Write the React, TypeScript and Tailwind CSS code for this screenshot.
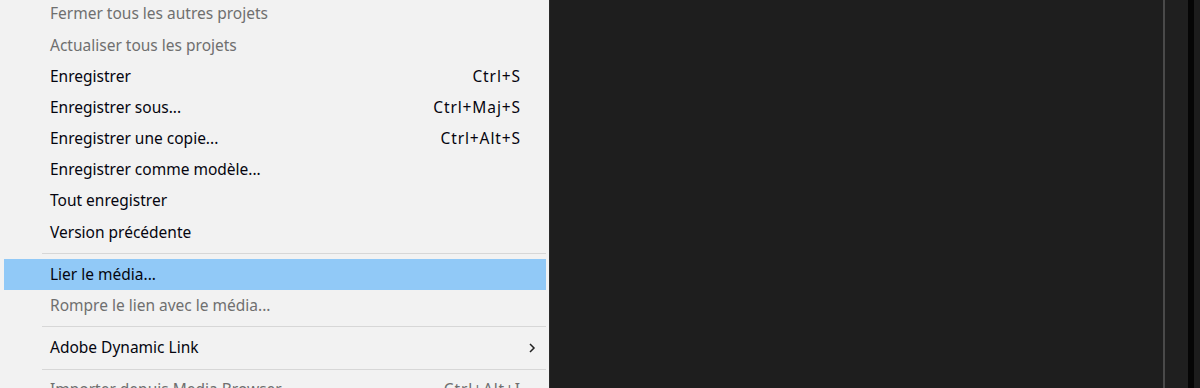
import React from "react";

type Item =
  | { kind: "item"; label: string; shortcut?: string; disabled?: boolean; active?: boolean; sub?: boolean }
  | { kind: "sep" };

const items: Item[] = [
  { kind: "item", label: "Fermer tous les autres projets", disabled: true },
  { kind: "item", label: "Actualiser tous les projets", disabled: true },
  { kind: "item", label: "Enregistrer", shortcut: "Ctrl+S" },
  { kind: "item", label: "Enregistrer sous...", shortcut: "Ctrl+Maj+S" },
  { kind: "item", label: "Enregistrer une copie...", shortcut: "Ctrl+Alt+S" },
  { kind: "item", label: "Enregistrer comme modèle..." },
  { kind: "item", label: "Tout enregistrer" },
  { kind: "item", label: "Version précédente" },
  { kind: "sep" },
  { kind: "item", label: "Lier le média...", active: true },
  { kind: "item", label: "Rompre le lien avec le média...", disabled: true },
  { kind: "sep" },
  { kind: "item", label: "Adobe Dynamic Link", sub: true },
  { kind: "sep" },
  { kind: "item", label: "Importer depuis Media Browser", shortcut: "Ctrl+Alt+I", disabled: true },
];

export default function App() {
  return (
    <div
      className="flex h-[388px] w-[1200px] overflow-hidden bg-[#1e1e1e]"
      style={{ fontFamily: '"Noto Sans", "Open Sans", sans-serif' }}
    >
      <div className="w-[549px] shrink-0 bg-[#f2f2f2] pl-[4px] pr-[3px]">
        <div className="mt-[-1.5px] flex flex-col">
          {items.map((it, i) =>
            it.kind === "sep" ? (
              <div key={i} className="py-[5px] pl-[38px]">
                <div className="h-px bg-[#d7d7d7]" />
              </div>
            ) : (
              <div
                key={i}
                className={
                  "flex h-[31.2px] items-center pl-[46px] pr-[25px] text-[15.5px] leading-none " +
                  (it.active ? "bg-[#91c9f7] " : "") +
                  (it.disabled ? "text-[#6f6f6f]" : "text-[#05050f]")
                }
              >
                <span className="flex-1 whitespace-nowrap">{it.label}</span>
                {it.shortcut && <span className="whitespace-nowrap tracking-[0.9px]">{it.shortcut}</span>}
                {it.sub && (
                  <svg width="8" height="12" viewBox="0 0 8 12" className="mr-[-15px]">
                    <path d="M2 2l4 4-4 4" fill="none" stroke="#222" strokeWidth="1.5" />
                  </svg>
                )}
              </div>
            )
          )}
        </div>
      </div>
      <div className="w-px shrink-0 bg-[#2a2a2a]" />
      <div className="w-[613px] shrink-0 bg-[#1e1e1e]" />
      <div className="w-[2px] shrink-0 bg-[#4a4a4a]" />
      <div className="w-[23px] shrink-0 bg-[#1f1f1f]" />
      <div className="w-[6px] shrink-0 bg-[#050505]" />
      <div className="flex-1 bg-[#1c1c1c]" />
    </div>
  );
}
